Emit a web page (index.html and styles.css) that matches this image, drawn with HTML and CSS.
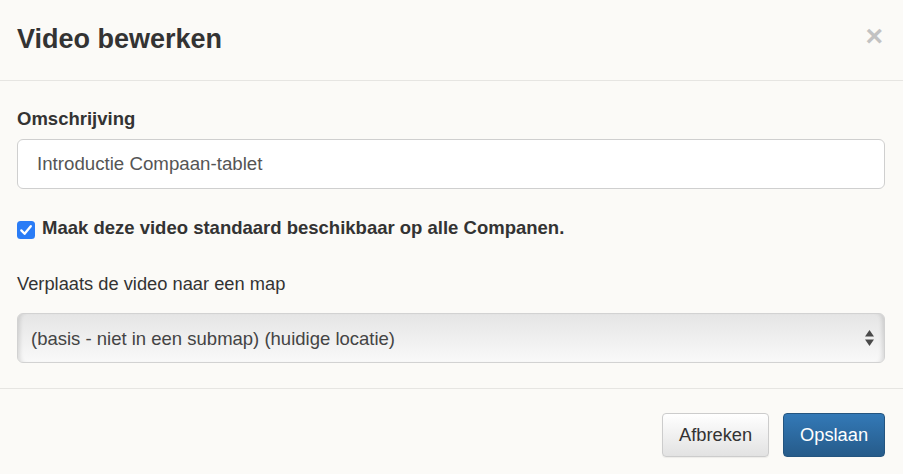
FILE: index.html
```html
<!DOCTYPE html>
<html lang="nl">
<head>
  <meta charset="UTF-8" />
  <meta name="viewport" content="width=device-width, initial-scale=1.0"/>
  <title>Video bewerken</title>
  <link rel="stylesheet" href="styles.css">
</head>
<body>

  <div class="modal">
    <div class="modal-header">
      <h2>Video bewerken</h2>
      <span class="close">&times;</span>
    </div>

    <div class="modal-body">
      <label class="field-label" for="omschrijving">Omschrijving</label>
      <input type="text" id="omschrijving" class="text-input" value="Introductie Compaan-tablet" />

      <label class="check-row">
        <svg class="check-box" width="18" height="18" viewBox="0 0 18 18">
          <rect x="0" y="0" width="18" height="18" rx="3.5" fill="#2a7cf6"/>
          <path d="M4.3 9.4 L7.6 12.8 L13.8 5.2" fill="none" stroke="#fff" stroke-width="2.3" stroke-linecap="round" stroke-linejoin="round"/>
        </svg>
        <span>Maak deze video standaard beschikbaar op alle Companen.</span>
      </label>

      <label class="plain-label" for="map">Verplaats de video naar een map</label>
      <div class="select-wrap">
        <select id="map" class="select">
          <option>(basis - niet in een submap) (huidige locatie)</option>
        </select>
        <!-- up/down arrows drawn over the select -->
        <svg class="select-arrows" width="9" height="16" viewBox="0 0 9 16">
          <path d="M4.5 0 L9 6.5 L0 6.5 Z" fill="#4a4a4a"/>
          <path d="M0 9.5 L9 9.5 L4.5 16 Z" fill="#4a4a4a"/>
        </svg>
      </div>
    </div>

    <div class="modal-footer">
      <button class="btn btn-default">Afbreken</button>
      <button class="btn btn-primary">Opslaan</button>
    </div>
  </div>

</body>
</html>
```

FILE: styles.css
```css
* {
  box-sizing: border-box;
  font-family: 'Liberation Sans', Arial, Helvetica, sans-serif;
}

body {
  margin: 0;
  padding: 0;
  background: #fbfaf7;
  color: #333;
}

.modal {
  width: 903px;
  height: 474px;
  background: #fbfaf7;
}

.modal-header {
  height: 81px;
  padding: 0 20px 0 17px;
  display: flex;
  align-items: center;
  justify-content: space-between;
  border-bottom: 1px solid #e6e5e2;
}

.modal-header h2 {
  margin: 0;
  font-size: 27px;
  font-weight: bold;
  color: #333;
  padding-bottom: 2px;
}

.close {
  font-size: 30px;
  font-weight: bold;
  color: #c2c2c2;
  line-height: 1;
  padding-bottom: 8px;
}

.modal-body {
  padding: 27px 18px 25px 17px;
  border-bottom: 1px solid #e6e5e2;
}

.field-label {
  display: block;
  font-size: 18.5px;
  font-weight: bold;
  line-height: 22px;
  margin-bottom: 9px;
}

.text-input {
  display: block;
  width: 100%;
  height: 50px;
  padding: 0 19px;
  font-size: 18.7px;
  color: #555;
  background: #fff;
  border: 1px solid #cfcfcf;
  border-radius: 6px;
  outline: none;
}

.check-row {
  display: flex;
  align-items: center;
  gap: 7px;
  margin-top: 28px;
  font-size: 18.5px;
  font-weight: bold;
  line-height: 22px;
  color: #333;
}

.check-box {
  flex-shrink: 0;
  margin-top: 3px;
}

.plain-label {
  display: block;
  margin-top: 34px;
  font-size: 18.3px;
  line-height: 22px;
  color: #333;
}

.select-wrap {
  position: relative;
  margin-top: 18px;
}

.select {
  display: block;
  width: 100%;
  height: 50px;
  padding: 0 13px;
  font-size: 18.5px;
  color: #444;
  -webkit-appearance: none;
  appearance: none;
  background: linear-gradient(#e5e5e5, #f9f9f9);
  border: 1px solid #d2d2d2;
  border-radius: 6px;
  box-shadow: inset 5px 0 4px -3px rgba(0, 0, 0, 0.12), inset -5px 0 4px -3px rgba(0, 0, 0, 0.12);
  outline: none;
}

.select-arrows {
  position: absolute;
  right: 11px;
  top: 17px;
  pointer-events: none;
}

.modal-footer {
  display: flex;
  justify-content: flex-end;
  gap: 14px;
  padding: 24px 18px 0 0;
}

.btn {
  height: 44px;
  padding: 0 16px;
  font-size: 18.3px;
  border-radius: 4px;
  cursor: pointer;
}

.btn-default {
  width: 107px;
  color: #333;
  background: linear-gradient(#ffffff, #e2e2e2);
  border: 1px solid #cccccc;
  box-shadow: 0 1px 1px rgba(0, 0, 0, 0.06);
}

.btn-primary {
  width: 102px;
  color: #fff;
  background: linear-gradient(#3379b7, #265b8a);
  border: 1px solid #245580;
}
```
